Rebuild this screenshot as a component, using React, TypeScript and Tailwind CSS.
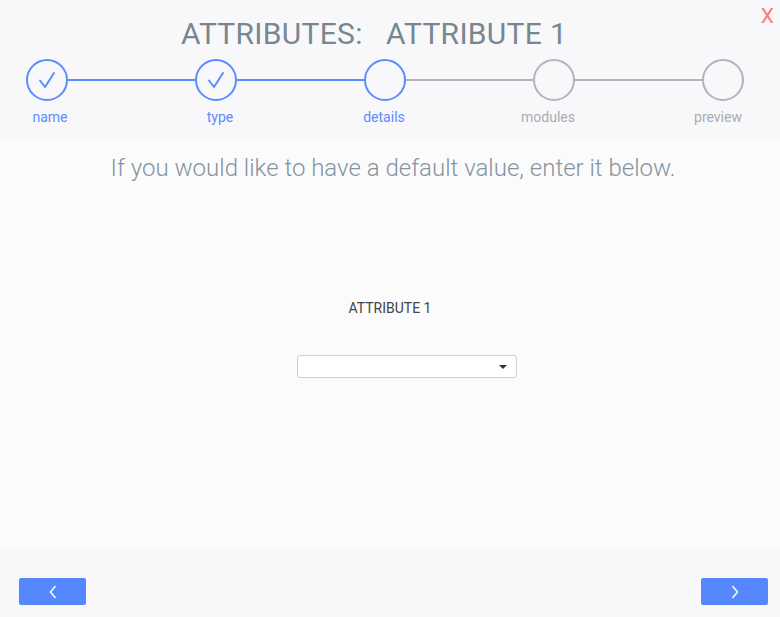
import React from 'react';

type Step = { label: string; state: 'done' | 'active' | 'todo'; shift: string };

const steps: Step[] = [
  { label: 'name', state: 'done', shift: 'pl-[6px]' },
  { label: 'type', state: 'done', shift: 'pl-[8px]' },
  { label: 'details', state: 'active', shift: 'pr-[2px]' },
  { label: 'modules', state: 'todo', shift: 'pr-[12px]' },
  { label: 'preview', state: 'todo', shift: 'pr-[10px]' },
];

const StepCircle: React.FC<{ step: Step }> = ({ step }) => {
  const blue = step.state !== 'todo';
  return (
    <div
      className={
        'flex h-[42px] w-[42px] shrink-0 items-center justify-center rounded-full border-2 bg-[#f8f8fb] ' +
        (blue ? 'border-[#5b8cff]' : 'border-[#b3b4b8]')
      }
    >
      {step.state === 'done' && (
        <svg width="20" height="20" viewBox="0 0 20 20" fill="none">
          <path d="M3 10.5 L8 17 L17 3" stroke="#5b8cff" strokeWidth="2" strokeLinecap="round" strokeLinejoin="round" />
        </svg>
      )}
    </div>
  );
};

const Stepper: React.FC = () => (
  <div className="pl-[26px] pr-[36px]">
    <div className="flex items-center">
      {steps.map((s, i) => (
        <React.Fragment key={s.label}>
          <StepCircle step={s} />
          {i < steps.length - 1 && (
            <div className={'h-[2px] flex-1 ' + (steps[i + 1].state !== 'todo' ? 'bg-[#5b8cff]' : 'bg-[#b3b4b8]')} />
          )}
        </React.Fragment>
      ))}
    </div>
    <div className="mt-[7px] flex justify-between">
      {steps.map((s) => (
        <div key={s.label} className={'flex w-[42px] justify-center ' + s.shift}>
          <span
            className={
              'whitespace-nowrap text-[14px] leading-[18px] ' +
              (s.state === 'todo' ? 'text-[#a9abb0]' : 'text-[#5b8cff]')
            }
          >
            {s.label}
          </span>
        </div>
      ))}
    </div>
  </div>
);

export default function App() {
  return (
    <div className="flex h-[617px] w-[780px] flex-col bg-[#fbfbfc] font-['Roboto',sans-serif]">
      <div className="relative h-[138px] bg-[#f8f8fb] pt-[14px]">
        <h1 className="pr-[32px] text-center text-[30px] leading-[40px] tracking-[0.3px] text-[#77878f]">
          ATTRIBUTES:&nbsp;&nbsp;&nbsp;ATTRIBUTE 1
        </h1>
        <button className="absolute right-[6px] top-[4px] text-[21px] leading-[24px] text-[#ff7a7a]">X</button>
        <div className="mt-[5px]">
          <Stepper />
        </div>
      </div>

      <div className="flex flex-1 flex-col items-center">
        <p className="ml-[6px] mt-[14px] text-[24px] font-light leading-[32px] text-[#8493a0]">
          If you would like to have a default value, enter it below.
        </p>
        <div className="mt-[115px] text-[14px] leading-[18px] text-[#444]">ATTRIBUTE 1</div>
        <div className="ml-[34px] mt-[38px] flex h-[23px] w-[220px] items-center justify-end rounded-[3px] border border-[#cfcfcf] bg-white pr-[9px]">
          <svg width="8" height="4" viewBox="0 0 8 4">
            <path d="M0 0 L8 0 L4 4 Z" fill="#333" />
          </svg>
        </div>
      </div>

      <div className="flex h-[69px] items-start justify-between bg-[#f8f8fb] pl-[19px] pr-[12px] pt-[30px]">
        <button className="flex h-[27px] w-[67px] items-center justify-center rounded-[2px] bg-[#5588ff]">
          <svg width="8" height="14" viewBox="0 0 8 14" fill="none">
            <path d="M6.5 1 L1.5 7 L6.5 13" stroke="white" strokeWidth="1.5" />
          </svg>
        </button>
        <button className="flex h-[27px] w-[67px] items-center justify-center rounded-[2px] bg-[#5588ff]">
          <svg width="8" height="14" viewBox="0 0 8 14" fill="none">
            <path d="M1.5 1 L6.5 7 L1.5 13" stroke="white" strokeWidth="1.5" />
          </svg>
        </button>
      </div>
    </div>
  );
}
